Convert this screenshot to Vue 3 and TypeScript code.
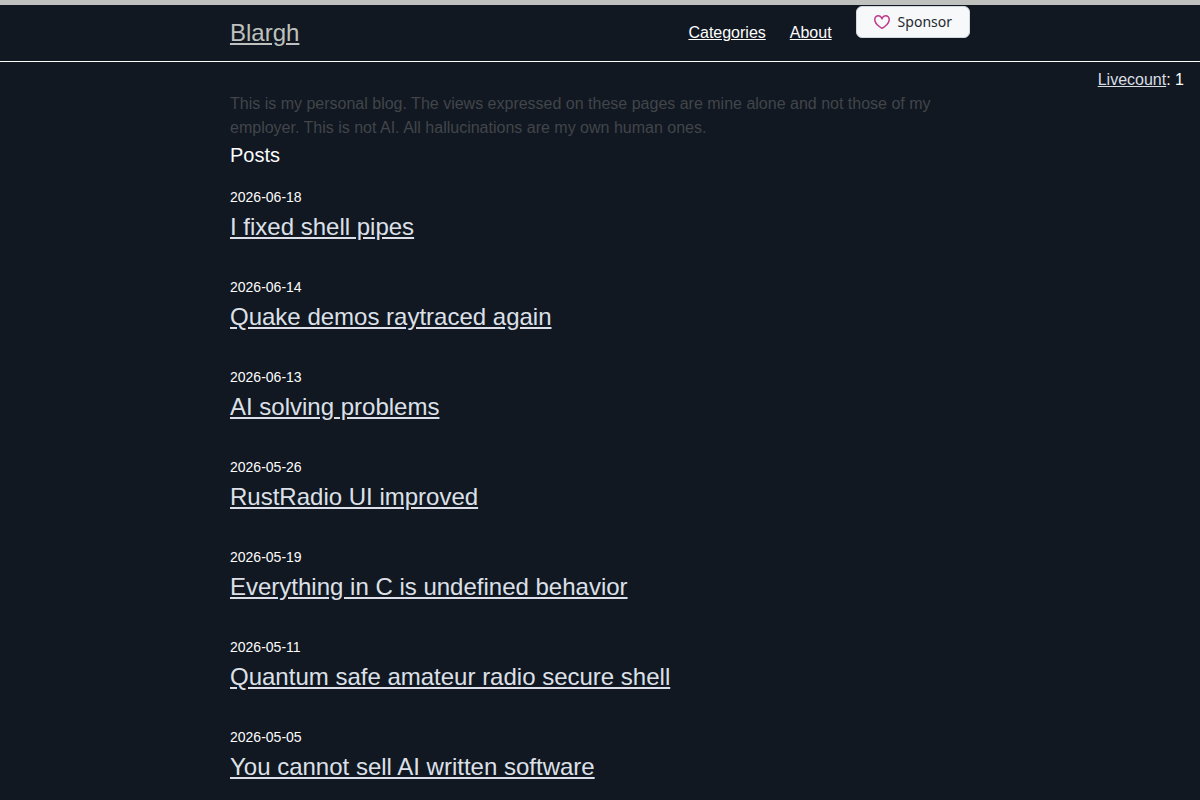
<script setup lang="ts">
interface Post {
  date: string
  title: string
}

const posts: Post[] = [
  { date: '2026-06-18', title: 'I fixed shell pipes' },
  { date: '2026-06-14', title: 'Quake demos raytraced again' },
  { date: '2026-06-13', title: 'AI solving problems' },
  { date: '2026-05-26', title: 'RustRadio UI improved' },
  { date: '2026-05-19', title: 'Everything in C is undefined behavior' },
  { date: '2026-05-11', title: 'Quantum safe amateur radio secure shell' },
  { date: '2026-05-05', title: 'You cannot sell AI written software' },
]
</script>

<template>
  <div class="page">
    <header class="site-header">
      <div class="wrapper bar">
        <a class="site-title" href="#">Blargh</a>
        <nav class="site-nav">
          <a href="#categories">Categories</a>
          <a href="#about">About</a>
          <a class="sponsor" href="#sponsor">
            <svg class="heart" viewBox="0 0 16 16" width="16" height="16" aria-hidden="true">
              <path
                d="m8 14.25.345.666a.75.75 0 0 1-.69 0l-.008-.004-.018-.01a7.152 7.152 0 0 1-.31-.17 22.055 22.055 0 0 1-3.434-2.414C2.045 10.731 0 8.35 0 5.5 0 2.836 2.086 1 4.25 1 5.797 1 7.153 1.802 8 3.02 8.847 1.802 10.203 1 11.75 1 13.914 1 16 2.836 16 5.5c0 2.85-2.045 5.231-3.885 6.818a22.066 22.066 0 0 1-3.744 2.584l-.018.01-.006.003h-.002ZM4.25 2.5c-1.336 0-2.75 1.164-2.75 3 0 2.15 1.58 4.144 3.365 5.682A20.58 20.58 0 0 0 8 13.393a20.58 20.58 0 0 0 3.135-2.211C12.92 9.644 14.5 7.65 14.5 5.5c0-1.836-1.414-3-2.75-3-1.373 0-2.609.986-3.029 2.456a.749.749 0 0 1-1.442 0C6.859 3.486 5.623 2.5 4.25 2.5Z"
              />
            </svg>
            <span>Sponsor</span>
          </a>
        </nav>
      </div>
    </header>

    <div class="livecount"><a href="#livecount">Livecount</a>: 1</div>

    <main class="wrapper">
      <p class="intro">
        This is my personal blog. The views expressed on these pages are mine alone and not those
        of my employer. This is not AI. All hallucinations are my own human ones.
      </p>
      <h1 class="heading">Posts</h1>
      <ul class="post-list">
        <li v-for="post in posts" :key="post.date">
          <time class="date" :datetime="post.date">{{ post.date }}</time>
          <h2 class="post-title"><a href="#post">{{ post.title }}</a></h2>
        </li>
      </ul>
    </main>
  </div>
</template>

<style>
body {
  margin: 0;
  background: #111822;
}
</style>

<style scoped>
.page {
  font-family: 'Liberation Sans', Arial, sans-serif;
  font-size: 16px;
  line-height: 24px;
  color: #fdfdfd;
}

a {
  color: inherit;
}

.wrapper {
  box-sizing: border-box;
  max-width: 800px;
  margin: 0 auto;
  padding: 0 30px;
}

.site-header {
  border-top: 5px solid #bfc1be;
  border-bottom: 1px solid #fdfdfd;
}

.bar {
  display: flex;
  justify-content: space-between;
}

.site-title {
  font-size: 24px;
  line-height: 56px;
  color: #bfc1be;
}

.site-nav {
  display: flex;
  align-items: flex-start;
  gap: 24px;
  line-height: 56px;
}

.sponsor {
  box-sizing: border-box;
  display: flex;
  align-items: center;
  gap: 8px;
  height: 32px;
  margin-top: 1px;
  padding: 0 17px;
  border: 1px solid #d1d9e0;
  border-radius: 6px;
  background: #f6f8fa;
  color: #25292e;
  font-family: 'Noto Sans', sans-serif;
  font-size: 14px;
  line-height: 20px;
  text-decoration: none;
}

.heart {
  fill: #bf3989;
}

.livecount {
  padding: 6px 16px 0;
  text-align: right;
}

.livecount a {
  color: #d9dde2;
}

.intro {
  margin: 0;
  color: #424549;
}

.heading {
  margin: 0 0 15px;
  font-size: 20px;
  font-weight: 400;
  line-height: 30px;
}

.post-list {
  margin: 0;
  padding: 0;
  list-style: none;
}

.post-list li {
  margin-bottom: 30px;
}

.date {
  display: block;
  font-size: 14px;
}

.post-title {
  margin: 0;
  font-size: 24px;
  font-weight: 400;
  line-height: 36px;
  color: #dde0e8;
}
</style>
